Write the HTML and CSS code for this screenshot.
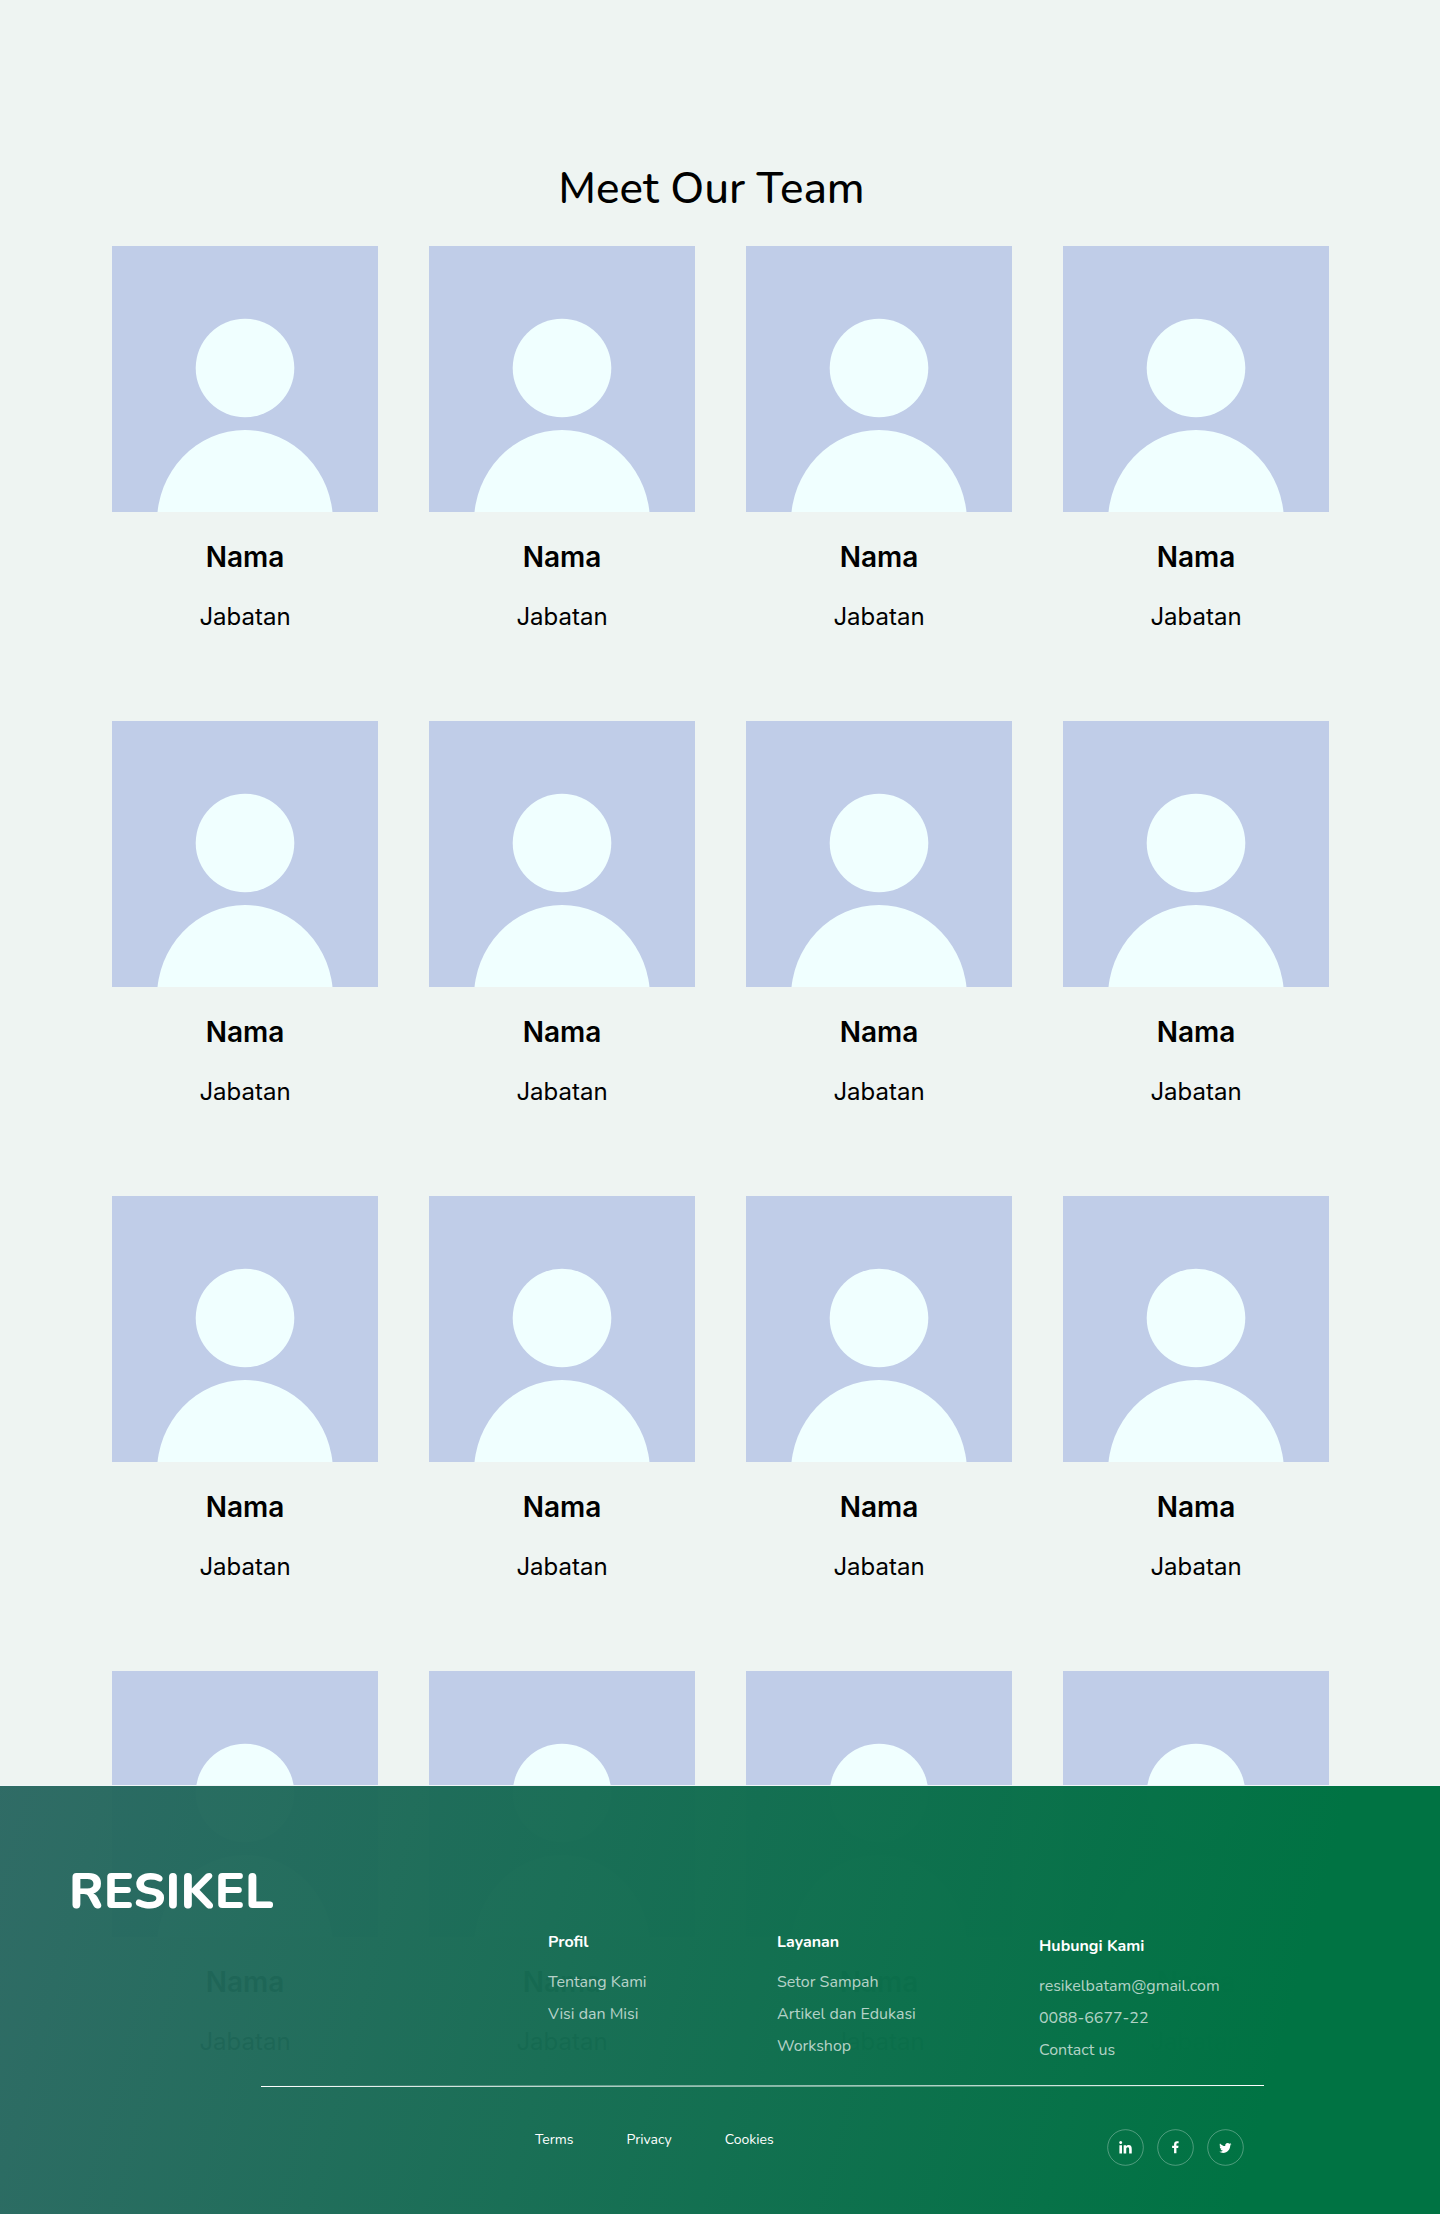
FILE: index.html
```html
<!DOCTYPE html>
<html lang="id">
<head>
<meta charset="utf-8">
<meta name="viewport" content="width=device-width, initial-scale=1">
<title>Resikel – Meet Our Team</title>
<link rel="stylesheet" href="styles.css">
</head>
<body>
<svg class="symbols" aria-hidden="true">
  <symbol id="avatar" viewBox="0 0 266 266">
    <circle cx="133" cy="122" r="49.3"/>
    <ellipse cx="133" cy="276" rx="88" ry="92"/>
  </symbol>
</svg>
<main class="team">
  <h1 class="team-title">Meet Our Team</h1>
  <ul class="team-grid">
    <li class="member"><svg class="photo"><use href="#avatar"/></svg><h2 class="name">Nama</h2><p class="role">Jabatan</p></li>
    <li class="member"><svg class="photo"><use href="#avatar"/></svg><h2 class="name">Nama</h2><p class="role">Jabatan</p></li>
    <li class="member"><svg class="photo"><use href="#avatar"/></svg><h2 class="name">Nama</h2><p class="role">Jabatan</p></li>
    <li class="member"><svg class="photo"><use href="#avatar"/></svg><h2 class="name">Nama</h2><p class="role">Jabatan</p></li>
    <li class="member"><svg class="photo"><use href="#avatar"/></svg><h2 class="name">Nama</h2><p class="role">Jabatan</p></li>
    <li class="member"><svg class="photo"><use href="#avatar"/></svg><h2 class="name">Nama</h2><p class="role">Jabatan</p></li>
    <li class="member"><svg class="photo"><use href="#avatar"/></svg><h2 class="name">Nama</h2><p class="role">Jabatan</p></li>
    <li class="member"><svg class="photo"><use href="#avatar"/></svg><h2 class="name">Nama</h2><p class="role">Jabatan</p></li>
    <li class="member"><svg class="photo"><use href="#avatar"/></svg><h2 class="name">Nama</h2><p class="role">Jabatan</p></li>
    <li class="member"><svg class="photo"><use href="#avatar"/></svg><h2 class="name">Nama</h2><p class="role">Jabatan</p></li>
    <li class="member"><svg class="photo"><use href="#avatar"/></svg><h2 class="name">Nama</h2><p class="role">Jabatan</p></li>
    <li class="member"><svg class="photo"><use href="#avatar"/></svg><h2 class="name">Nama</h2><p class="role">Jabatan</p></li>
    <li class="member"><svg class="photo"><use href="#avatar"/></svg><h2 class="name">Nama</h2><p class="role">Jabatan</p></li>
    <li class="member"><svg class="photo"><use href="#avatar"/></svg><h2 class="name">Nama</h2><p class="role">Jabatan</p></li>
    <li class="member"><svg class="photo"><use href="#avatar"/></svg><h2 class="name">Nama</h2><p class="role">Jabatan</p></li>
    <li class="member"><svg class="photo"><use href="#avatar"/></svg><h2 class="name">Nama</h2><p class="role">Jabatan</p></li>
  </ul>
</main>
<footer class="footer">
  <p class="brand">RESIKEL</p>
  <div class="columns">
    <section>
      <h2 class="column-title">Profil</h2>
      <ul class="links">
        <li><a href="#">Tentang Kami</a></li>
        <li><a href="#">Visi dan Misi</a></li>
      </ul>
    </section>
    <section>
      <h2 class="column-title">Layanan</h2>
      <ul class="links">
        <li><a href="#">Setor Sampah</a></li>
        <li><a href="#">Artikel dan Edukasi</a></li>
        <li><a href="#">Workshop</a></li>
      </ul>
    </section>
    <section class="contact">
      <h2 class="column-title">Hubungi Kami</h2>
      <ul class="links">
        <li><a href="#">resikelbatam@gmail.com</a></li>
        <li><a href="#">0088-6677-22</a></li>
        <li><a href="#">Contact us</a></li>
      </ul>
    </section>
  </div>
  <svg class="rule" viewBox="0 0 1003 2" preserveAspectRatio="none" aria-hidden="true"><line x1="0" y1="1.5" x2="1003" y2="0.5"/></svg>
  <div class="bottom">
    <nav class="legal" aria-label="Legal">
      <a href="#">Terms</a>
      <a href="#">Privacy</a>
      <a href="#">Cookies</a>
    </nav>
    <div class="social">
      <a href="#" aria-label="LinkedIn"><svg viewBox="0 0 37 37"><circle class="ring" cx="18.5" cy="18.5" r="17.8"/><path transform="translate(12.2 12) scale(.028)" d="M100.28 448H7.4V148.9h92.88zM53.79 108.1C24.09 108.1 0 83.5 0 53.8a53.79 53.79 0 0 1 107.58 0c0 29.7-24.1 54.3-53.79 54.3zM447.9 448h-92.68V302.4c0-34.7-.7-79.2-48.29-79.2-48.29 0-55.69 37.7-55.69 76.7V448h-92.78V148.9h89.08v40.8h1.3c12.4-23.5 42.69-48.3 87.88-48.3 94 0 111.28 61.9 111.28 142.3V448z"/></svg></a>
      <a href="#" aria-label="Facebook"><svg viewBox="0 0 37 37"><circle class="ring" cx="18.5" cy="18.5" r="17.8"/><path transform="translate(14.6 12.2) scale(.0236)" d="M279.14 288l14.22-92.66h-88.91v-60.13c0-25.35 12.42-50.06 52.24-50.06h40.42V6.26S260.43 0 225.36 0c-73.22 0-121.08 44.38-121.08 124.72v70.62H22.89V288h81.39v224h100.17V288z"/></svg></a>
      <a href="#" aria-label="Twitter"><svg viewBox="0 0 37 37"><circle class="ring" cx="18.5" cy="18.5" r="17.8"/><path transform="translate(12.2 12.8) scale(.51)" d="M23.953 4.57a10 10 0 01-2.825.775 4.958 4.958 0 002.163-2.723c-.951.555-2.005.959-3.127 1.184a4.92 4.92 0 00-8.384 4.482C7.69 8.095 4.067 6.13 1.64 3.162a4.822 4.822 0 00-.666 2.475c0 1.71.87 3.213 2.188 4.096a4.904 4.904 0 01-2.228-.616v.06a4.923 4.923 0 003.946 4.827 4.996 4.996 0 01-2.212.085 4.936 4.936 0 004.604 3.417 9.867 9.867 0 01-6.102 2.105c-.39 0-.779-.023-1.17-.067a13.995 13.995 0 007.557 2.209c9.053 0 13.998-7.496 13.998-13.985 0-.21 0-.42-.015-.63A9.935 9.935 0 0024 4.59z"/></svg></a>
    </div>
  </div>
</footer>
</body>
</html>
```
FILE: styles.css
```css
* {
  box-sizing: border-box;
  margin: 0;
  padding: 0;
}

body {
  background: #eef4f2;
  color: #000;
  font-family: Nunito, Lato, sans-serif;
}

ul {
  list-style: none;
}

a {
  color: inherit;
  text-decoration: none;
}

.symbols {
  display: block;
  width: 0;
  height: 0;
}

/* Team */

.team {
  padding: 159px 111px 0 112px;
}

.team-title {
  padding-right: 18px;
  font-size: 44px;
  font-weight: 500;
  line-height: 60px;
  text-align: center;
}

.team-grid {
  display: grid;
  grid-template-columns: repeat(4, minmax(0, 1fr));
  gap: 89px 51px;
  margin-top: 27px;
}

.member {
  font-family: Inter, sans-serif;
  text-align: center;
}

.photo {
  display: block;
  width: 100%;
  aspect-ratio: 1;
  background: #c0cde8;
  fill: #f0ffff;
}

.name {
  margin-top: 28px;
  font-size: 28px;
  font-weight: 600;
  line-height: 34px;
}

.role {
  margin-top: 28px;
  font-size: 24px;
  line-height: 30px;
}

/* Footer: slightly translucent, overlaps the last row of the team */

.footer {
  position: relative;
  margin-top: -272px;
  padding: 72px 0 48px;
  border-top: 1px solid #f0f6f8;
  background: linear-gradient(105deg, rgba(40, 102, 96, 0.96), #007343 87%) padding-box;
  color: #fff;
}

.brand {
  padding-left: 69px;
  font-size: 50px;
  font-weight: 800;
  line-height: 68px;
}

.columns {
  display: grid;
  grid-template-columns: 229fr 262fr 401fr;
  padding-left: 548px;
}

.contact {
  padding-top: 4px;
}

.column-title {
  margin-bottom: 8px;
  font-size: 16px;
  font-weight: 700;
  line-height: 32px;
}

.links {
  color: rgba(255, 255, 255, 0.7);
  font-size: 16px;
  line-height: 32px;
}

.rule {
  display: block;
  width: calc(100% - 437px);
  height: 2px;
  margin: 19px 176px 0 261px;
  stroke: #fff;
}

.bottom {
  display: flex;
  justify-content: space-between;
  align-items: flex-start;
  margin-top: 42px;
  padding: 0 196px 0 535px;
}

.legal {
  display: flex;
  gap: 53px;
  font-size: 14px;
  line-height: 22px;
}

.social {
  display: flex;
  gap: 13px;
}

.social svg {
  display: block;
  width: 37px;
  height: 37px;
  fill: #fff;
}

.social .ring {
  fill: none;
  stroke: #fff;
  stroke-opacity: 0.3;
}
```
